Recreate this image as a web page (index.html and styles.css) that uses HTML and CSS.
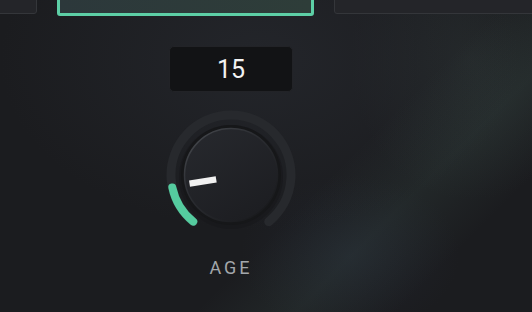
FILE: index.html
```html
<!DOCTYPE html>
<html lang="en">
<head>
    <meta charset="UTF-8">
    <meta name="viewport" content="width=device-width, initial-scale=1.0">
    <title>Voice Age</title>
    <link rel="stylesheet" href="styles.css">
</head>
<body>
    <div class="page">
        <div class="presets">
            <div class="preset"></div>
            <div class="preset active"></div>
            <div class="preset"></div>
        </div>
        <div class="control">
            <div class="value">15</div>
            <svg class="knob" width="140" height="140" viewBox="0 0 140 140">
                <defs>
                    <linearGradient id="face" x1="0" y1="0" x2="0.6" y2="1">
                        <stop offset="0" stop-color="#27292e"/>
                        <stop offset="1" stop-color="#1d1e22"/>
                    </linearGradient>
                    <linearGradient id="rim" x1="0" y1="0" x2="0.8" y2="0.9">
                        <stop offset="0" stop-color="#4a4d52"/>
                        <stop offset="0.45" stop-color="#2c2e33"/>
                        <stop offset="1" stop-color="#1a1b1e"/>
                    </linearGradient>
                </defs>
                <!-- track -->
                <path d="M32.24 116.63 A60 60 0 1 1 107.76 116.63" fill="none" stroke="#27292d" stroke-width="9" stroke-linecap="round"/>
                <!-- value -->
                <path d="M32.24 116.63 A60 60 0 0 1 11.31 82.47" fill="none" stroke="#55cc9f" stroke-width="8" stroke-linecap="round"/>
                <!-- knob -->
                <circle cx="70" cy="72" r="52" fill="#17181a" opacity="0.6"/>
                <circle cx="70" cy="70" r="50" fill="#161719"/>
                <circle cx="70" cy="70" r="46.5" fill="url(#face)" stroke="url(#rim)" stroke-width="1.5"/>
                <rect x="-42" y="-3.2" width="27" height="6.4" fill="#f1f1f1" transform="translate(70 72) rotate(-9)"/>
            </svg>
            <div class="label">AGE</div>
        </div>
    </div>
</body>
</html>
```

FILE: styles.css
```css
body {
    margin: 0;
    font-family: Roboto, "Liberation Sans", sans-serif;
}
.page {
    height: 312px;
    overflow: hidden;
    background:
        linear-gradient(135deg, rgba(0,0,0,0) 60%, rgba(70,98,90,0.17) 72%, rgba(0,0,0,0) 84%),
        radial-gradient(ellipse 260px 170px at 260px 60px, rgba(42,45,52,0.55), rgba(0,0,0,0)),
        radial-gradient(ellipse 120px 140px at 470px 60px, rgba(44,52,52,0.5), rgba(0,0,0,0)),
        radial-gradient(ellipse 110px 80px at 350px 255px, rgba(40,46,62,0.35), rgba(0,0,0,0)),
        #1b1c1f;
}
.presets {
    display: flex;
    align-items: flex-start;
    gap: 20px;
    margin-top: -40px;
    margin-left: -220px;
}
.preset {
    flex: 0 0 257px;
    height: 54px;
    box-sizing: border-box;
    border: 1px solid #34363a;
    border-radius: 0 0 3px 3px;
    background: #242529;
}
.preset.active {
    height: 56px;
    border: 3px solid #5dcfa6;
    background: linear-gradient(90deg, #2c383b, #2e3d39);
}
.control {
    width: 140px;
    margin-left: 161px;
    display: flex;
    flex-direction: column;
    align-items: center;
}
.value {
    margin-top: 30px;
    width: 124px;
    height: 46px;
    box-sizing: border-box;
    border: 1px solid #222327;
    border-radius: 5px;
    background: #121315;
    color: #f2f2f2;
    font-size: 25px;
    display: flex;
    align-items: center;
    justify-content: center;
}
.knob {
    display: block;
    margin-top: 13px;
}
.label {
    margin-top: 12px;
    font-size: 18px;
    line-height: 21px;
    letter-spacing: 3px;
    color: #a3a7ab;
}
```
